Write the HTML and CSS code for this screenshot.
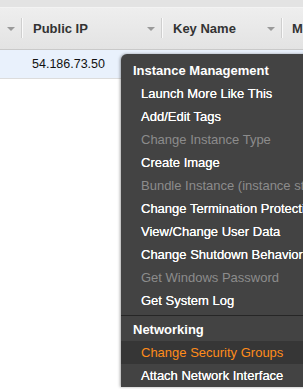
FILE: index.html
```html
<!DOCTYPE html>
<html lang="en">
<head>
  <meta charset="UTF-8" />
  <title>Instances</title>
  <link rel="stylesheet" href="styles.css">
</head>
<body>
  <div class="page">
    <div class="toolbar"></div>
    <div class="grid-header">
      <div class="col col-first">
        <span class="sort-arrow"></span>
      </div>
      <div class="col col-ip">
        <span class="col-title">Public IP</span>
        <span class="sort-arrow"></span>
      </div>
      <div class="col col-key">
        <span class="col-title">Key Name</span>
        <span class="sort-arrow"></span>
      </div>
      <div class="col col-last">
        <span class="col-title">Monitoring</span>
      </div>
    </div>
    <div class="grid-row selected">
      <div class="cell cell-first"></div>
      <div class="cell cell-ip">54.186.73.50</div>
    </div>

    <div class="context-menu">
      <div class="menu-group">
        <div class="group-title">Instance Management</div>
        <div class="menu-item">Launch More Like This</div>
        <div class="menu-item">Add/Edit Tags</div>
        <div class="menu-item disabled">Change Instance Type</div>
        <div class="menu-item">Create Image</div>
        <div class="menu-item disabled">Bundle Instance (instance store AMI)</div>
        <div class="menu-item">Change Termination Protection</div>
        <div class="menu-item">View/Change User Data</div>
        <div class="menu-item">Change Shutdown Behavior</div>
        <div class="menu-item disabled">Get Windows Password</div>
        <div class="menu-item">Get System Log</div>
      </div>
      <div class="menu-group">
        <div class="group-title">Networking</div>
        <div class="menu-item active">Change Security Groups</div>
        <div class="menu-item">Attach Network Interface</div>
      </div>
    </div>
  </div>
</body>
</html>
```

FILE: styles.css
```css
* {
  margin: 0;
  padding: 0;
  box-sizing: border-box;
}

body {
  font-family: 'Liberation Sans', Arial, sans-serif;
  background-color: #ffffff;
  overflow: hidden;
}

.page {
  position: relative;
  width: 303px;
  height: 389px;
  overflow: hidden;
}

.toolbar {
  height: 8px;
  background-color: #e3e3e3;
  border-bottom: 1px solid #f3f3f3;
}

.grid-header {
  display: flex;
  height: 42px;
  background: linear-gradient(#eeeeee, #e3e3e3);
  border-bottom: 1px solid #c9c9c9;
  white-space: nowrap;
}

.col {
  display: flex;
  align-items: center;
  border-right: 1px solid #cfcfcf;
  box-shadow: 1px 0 0 #fafafa;
  margin: 10px 0 11px;
  flex-shrink: 0;
}

.col-first {
  width: 22px;
  justify-content: flex-end;
  padding-right: 6px;
}

.col-ip {
  width: 140px;
  padding-left: 11px;
  padding-right: 6px;
}

.col-key {
  width: 120px;
  padding-left: 11px;
  padding-right: 6px;
}

.col-last {
  border-right: none;
  box-shadow: none;
  padding-left: 10px;
}

.col-title {
  font-size: 13px;
  font-weight: bold;
  color: #333333;
  flex: 1;
}

.sort-arrow {
  width: 0;
  height: 0;
  border-left: 4px solid transparent;
  border-right: 4px solid transparent;
  border-top: 4px solid #9a9a9a;
  margin-top: 2px;
}

.grid-row {
  display: flex;
  height: 29px;
  align-items: center;
  border-bottom: 1px solid #dcdcdc;
}

.grid-row.selected {
  background-color: #e9f1fc;
}

.cell-first {
  width: 32px;
}

.cell-ip {
  font-size: 12.5px;
  color: #111111;
  padding-bottom: 1px;
}

.context-menu {
  position: absolute;
  left: 121px;
  top: 54px;
  width: 220px;
  background-color: #434343;
  border-top-left-radius: 6px;
  box-shadow: -1px 0 3px rgba(0, 0, 0, 0.35);
  padding-top: 6px;
  white-space: nowrap;
  overflow: hidden;
}

.menu-group + .menu-group {
  border-top: 1px solid #262626;
  margin-top: 3px;
  padding-top: 3px;
}

.group-title {
  font-size: 13px;
  font-weight: bold;
  color: #ffffff;
  padding-left: 12px;
  height: 22px;
  line-height: 22px;
}

.menu-item {
  font-size: 13px;
  color: #ffffff;
  padding-left: 20px;
  height: 23px;
  line-height: 23px;
  text-shadow: 0 0 0.4px #ffffff;
}

.menu-item.disabled {
  color: #8c8c8c;
  text-shadow: none;
}

.menu-item.active {
  background-color: #363636;
  color: #ff8c1a;
  text-shadow: none;
}
```
